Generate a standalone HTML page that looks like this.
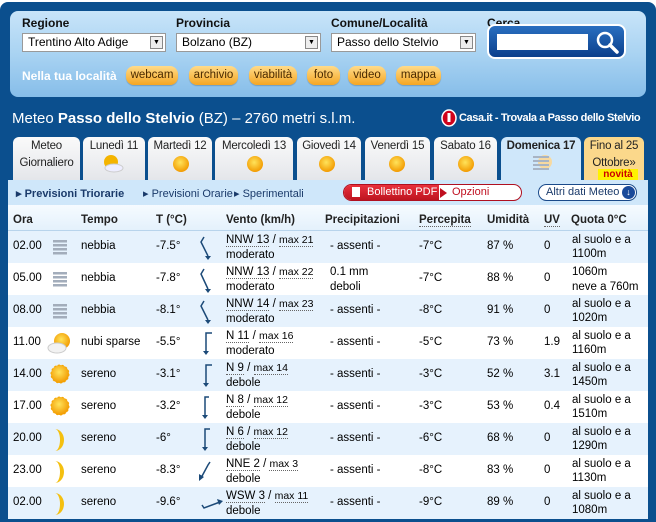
<!DOCTYPE html>
<html><head><meta charset="utf-8"><style>
*{margin:0;padding:0;box-sizing:border-box}
body{width:656px;height:522px;overflow:hidden;background:#fff;font-family:"Liberation Sans",Arial,sans-serif;font-size:12px;color:#000;position:relative}
.frame{position:absolute;left:0;top:2px;width:656px;height:520px;background:#0b4f8e;border-radius:8px 8px 0 0}
.panel{position:absolute;left:10px;top:11px;width:636px;height:86px;border-radius:8px;background:linear-gradient(#c8e4f9,#a9d3f2 50%,#86bde9)}
.lbl{position:absolute;top:16px;font-weight:bold;font-size:12px;color:#111}
.sel{position:absolute;top:33px;height:19px;background:#fff;border:1px solid #999;font-size:12px;padding:2px 5px;line-height:13px}
.sel i{position:absolute;right:2px;top:2px;width:13px;height:13px;border:1px solid #888;background:#eee;font-style:normal;font-size:7px;text-align:center;line-height:12px}
.search{position:absolute;left:487px;top:24px;width:139px;height:35px;border-radius:8px;background:linear-gradient(#2a6fc0,#0b3f8c);border:2px solid #fff}
.search .in{position:absolute;left:8px;top:8px;width:91px;height:16px;background:#fff}
.pill{position:absolute;top:66px;height:19px;border-radius:8px;background:linear-gradient(#ffdb8a,#f5a623);color:#4a2a00;font-size:11.5px;text-align:center;line-height:19px;box-shadow:0 1px 1px rgba(0,0,0,.2)}
.title{position:absolute;left:12px;top:110px;color:#fff;font-size:15px}
.casa{position:absolute;top:112px;color:#fff;font-size:11px;font-weight:bold;letter-spacing:-.4px;white-space:nowrap}
.tab{position:absolute;top:137px;height:43px;background:linear-gradient(#fafafa,#e4e6ea);border-radius:6px 6px 0 0;text-align:center;font-size:11.5px;color:#222;line-height:14px;padding-top:2px;white-space:nowrap;letter-spacing:-.2px}
.sub{position:absolute;left:8px;top:180px;width:640px;height:25px;background:#cfe7fa}
.sub span{position:absolute;top:7px;font-size:11px;color:#1a3a6a;white-space:nowrap}
.thead{position:absolute;left:8px;top:205px;width:640px;height:26px;background:linear-gradient(#f6fbff,#e4f1fc);border-bottom:1px solid #b8d4ec}
.th{position:absolute;top:9px;font-weight:bold;font-size:11.5px;color:#222}
.row{position:absolute;left:8px;width:640px;height:32px}
.row div{position:absolute;font-size:11.5px;white-space:nowrap}
.u{border-bottom:1px dotted #666}
.s{font-size:10.5px}
</style></head><body>
<div class="frame"></div>
<div class="panel"></div>
<div class="lbl" style="left:22px">Regione</div>
<div class="lbl" style="left:176px">Provincia</div>
<div class="lbl" style="left:331px">Comune/Località</div>
<div class="lbl" style="left:487px;top:16px">Cerca</div>
<div class="sel" style="left:22px;width:144px">Trentino Alto Adige<i>▼</i></div>
<div class="sel" style="left:176px;width:145px">Bolzano (BZ)<i>▼</i></div>
<div class="sel" style="left:331px;width:145px">Passo dello Stelvio<i>▼</i></div>
<div class="search"><div class="in"></div>
<svg style="position:absolute;left:106px;top:4px" width="26" height="24"><circle cx="10" cy="10" r="7" fill="none" stroke="#fff" stroke-width="2.5"/><line x1="15" y1="15" x2="22" y2="22" stroke="#fff" stroke-width="3.5" stroke-linecap="round"/></svg></div>
<div style="position:absolute;left:22px;top:69px;color:#fff;font-weight:bold;font-size:12px">Nella tua località</div>
<div class="pill" style="left:126px;width:52px">webcam</div>
<div class="pill" style="left:189px;width:49px">archivio</div>
<div class="pill" style="left:249px;width:48px">viabilità</div>
<div class="pill" style="left:307px;width:33px">foto</div>
<div class="pill" style="left:348px;width:38px">video</div>
<div class="pill" style="left:396px;width:45px">mappa</div>
<div class="title">Meteo <b>Passo dello Stelvio</b> (BZ) – 2760 metri s.l.m.</div>
<svg style="position:absolute;left:441px;top:109px" width="16" height="18"><ellipse cx="8" cy="9" rx="7" ry="8" fill="#d0021b" stroke="#fff" stroke-width="1.5"/><rect x="6.5" y="4" width="3" height="9" fill="#fff"/></svg>
<div class="casa" style="left:459px">Casa.it - Trovala a Passo dello Stelvio</div>

<div class="tab" style="left:13px;width:67px">Meteo<br><span style="line-height:20px">Giornaliero</span></div>
<div class="tab" style="left:83px;width:62px">Lunedì 11</div>
<div class="tab" style="left:148px;width:64px">Martedì 12</div>
<div class="tab" style="left:215px;width:78px">Mercoledì 13</div>
<div class="tab" style="left:297px;width:64px">Giovedì 14</div>
<div class="tab" style="left:365px;width:65px">Venerdì 15</div>
<div class="tab" style="left:434px;width:63px">Sabato 16</div>
<div class="tab" style="left:501px;width:80px;background:#cfe7fa;font-weight:bold">Domenica 17</div>
<div class="tab" style="left:584px;width:60px;background:#fbd88b">Fino al 25<br><span style="line-height:20px">Ottobre»</span></div>
<div style="position:absolute;left:598px;top:169px;width:40px;height:11px;background:#fff200;color:#c00;font-weight:bold;font-size:10px;text-align:center;line-height:11px">novità</div>
<svg style="position:absolute;left:0;top:0" width="656" height="522">
<defs><radialGradient id="sun" cx="45%" cy="40%" r="60%"><stop offset="0" stop-color="#ffe35a"/><stop offset="1" stop-color="#f29a00"/></radialGradient></defs>
<g fill="url(#sun)"><circle cx="111" cy="162" r="7" fill="#f4b400"/><circle cx="181" cy="164" r="8"/><circle cx="255" cy="164" r="8"/><circle cx="327" cy="164" r="8"/><circle cx="397" cy="164" r="8"/><circle cx="466" cy="164" r="8"/></g>
<ellipse cx="114" cy="168" rx="9" ry="4" fill="#eef" stroke="#ccc"/>
<circle cx="545" cy="162" r="7" fill="#f7d9a0"/>
<g fill="#a8b4c4"><rect x="533" y="156" width="16" height="2"/><rect x="533" y="160" width="16" height="2"/><rect x="533" y="164" width="16" height="2"/><rect x="533" y="168" width="16" height="2"/></g>
</svg>

<div class="sub">
<span style="left:8px;font-weight:bold">▸ Previsioni Triorarie</span>
<span style="left:135px">▸ Previsioni Orarie</span>
<span style="left:226px">▸ Sperimentali</span>
<div style="position:absolute;left:335px;top:4px;width:179px;height:17px;border:1px solid #b01020;border-radius:9px;background:#fff;overflow:hidden">
<div style="position:absolute;left:0;top:0;width:95px;height:17px;background:linear-gradient(#e8313c,#b8101c);color:#fff;font-size:11px;line-height:15px;padding-left:23px;white-space:nowrap">Bollettino PDF</div>
<div style="position:absolute;left:8px;top:2px;width:8px;height:10px;background:#fff"></div>
<div style="position:absolute;left:96px;top:3px;width:0;height:0;border-left:7px solid #c01020;border-top:5px solid transparent;border-bottom:5px solid transparent"></div>
<div style="position:absolute;left:108px;top:1px;color:#c01020;font-size:11px">Opzioni</div></div>
<div style="position:absolute;left:530px;top:4px;width:99px;height:17px;border:1px solid #1a4a8a;border-radius:9px;background:#fff;font-size:11px;color:#1a3a6a;line-height:15px;padding-left:7px;white-space:nowrap">Altri dati Meteo
<div style="position:absolute;right:1px;top:1px;width:13px;height:13px;border-radius:50%;background:#1a4a9a;color:#fff;font-size:9px;text-align:center;line-height:13px">↓</div></div>
</div>

<div class="thead">
<div class="th" style="left:5px">Ora</div><div class="th" style="left:73px">Tempo</div><div class="th" style="left:148px">T (°C)</div><div class="th" style="left:218px">Vento (km/h)</div><div class="th" style="left:317px">Precipitazioni</div><div class="th u" style="left:411px">Percepita</div><div class="th" style="left:479px">Umidità</div><div class="th u" style="left:536px">UV</div><div class="th" style="left:563px">Quota 0°C</div>
</div>

<div class="row" style="top:231px;background:#e6f2fd"><div style="left:5px;top:9px">02.00</div><div style="left:73px;top:9px">nebbia</div><div style="left:148px;top:9px">-7.5°</div><div style="left:218px;top:3px"><span class="u">NNW 13</span> / <span class="u s">max 21</span></div><div class="s" style="left:218px;top:18px">moderato</div><div style="left:322px;top:9px">- assenti -</div><div style="left:411px;top:9px">-7°C</div><div style="left:479px;top:9px">87 %</div><div style="left:536px;top:9px">0</div><div class="s" style="left:564px;top:3px">al suolo e a</div><div style="left:564px;top:17px">1100m</div></div>
<div class="row" style="top:263px;background:#fff"><div style="left:5px;top:9px">05.00</div><div style="left:73px;top:9px">nebbia</div><div style="left:148px;top:9px">-7.8°</div><div style="left:218px;top:3px"><span class="u">NNW 13</span> / <span class="u s">max 22</span></div><div class="s" style="left:218px;top:18px">moderato</div><div style="left:322px;top:3px">0.1 mm</div><div class="s" style="left:322px;top:18px">deboli</div><div style="left:411px;top:9px">-7°C</div><div style="left:479px;top:9px">88 %</div><div style="left:536px;top:9px">0</div><div style="left:564px;top:3px">1060m</div><div class="s" style="left:564px;top:18px">neve a 760m</div></div>
<div class="row" style="top:295px;background:#e6f2fd"><div style="left:5px;top:9px">08.00</div><div style="left:73px;top:9px">nebbia</div><div style="left:148px;top:9px">-8.1°</div><div style="left:218px;top:3px"><span class="u">NNW 14</span> / <span class="u s">max 23</span></div><div class="s" style="left:218px;top:18px">moderato</div><div style="left:322px;top:9px">- assenti -</div><div style="left:411px;top:9px">-8°C</div><div style="left:479px;top:9px">91 %</div><div style="left:536px;top:9px">0</div><div class="s" style="left:564px;top:3px">al suolo e a</div><div style="left:564px;top:17px">1020m</div></div>
<div class="row" style="top:327px;background:#fff"><div style="left:5px;top:9px">11.00</div><div style="left:73px;top:9px">nubi sparse</div><div style="left:148px;top:9px">-5.5°</div><div style="left:218px;top:3px"><span class="u">N 11</span> / <span class="u s">max 16</span></div><div class="s" style="left:218px;top:18px">moderato</div><div style="left:322px;top:9px">- assenti -</div><div style="left:411px;top:9px">-5°C</div><div style="left:479px;top:9px">73 %</div><div style="left:536px;top:9px">1.9</div><div class="s" style="left:564px;top:3px">al suolo e a</div><div style="left:564px;top:17px">1160m</div></div>
<div class="row" style="top:359px;background:#e6f2fd"><div style="left:5px;top:9px">14.00</div><div style="left:73px;top:9px">sereno</div><div style="left:148px;top:9px">-3.1°</div><div style="left:218px;top:3px"><span class="u">N 9</span> / <span class="u s">max 14</span></div><div class="s" style="left:218px;top:18px">debole</div><div style="left:322px;top:9px">- assenti -</div><div style="left:411px;top:9px">-3°C</div><div style="left:479px;top:9px">52 %</div><div style="left:536px;top:9px">3.1</div><div class="s" style="left:564px;top:3px">al suolo e a</div><div style="left:564px;top:17px">1450m</div></div>
<div class="row" style="top:391px;background:#fff"><div style="left:5px;top:9px">17.00</div><div style="left:73px;top:9px">sereno</div><div style="left:148px;top:9px">-3.2°</div><div style="left:218px;top:3px"><span class="u">N 8</span> / <span class="u s">max 12</span></div><div class="s" style="left:218px;top:18px">debole</div><div style="left:322px;top:9px">- assenti -</div><div style="left:411px;top:9px">-3°C</div><div style="left:479px;top:9px">53 %</div><div style="left:536px;top:9px">0.4</div><div class="s" style="left:564px;top:3px">al suolo e a</div><div style="left:564px;top:17px">1510m</div></div>
<div class="row" style="top:423px;background:#e6f2fd"><div style="left:5px;top:9px">20.00</div><div style="left:73px;top:9px">sereno</div><div style="left:148px;top:9px">-6°</div><div style="left:218px;top:3px"><span class="u">N 6</span> / <span class="u s">max 12</span></div><div class="s" style="left:218px;top:18px">debole</div><div style="left:322px;top:9px">- assenti -</div><div style="left:411px;top:9px">-6°C</div><div style="left:479px;top:9px">68 %</div><div style="left:536px;top:9px">0</div><div class="s" style="left:564px;top:3px">al suolo e a</div><div style="left:564px;top:17px">1290m</div></div>
<div class="row" style="top:455px;background:#fff"><div style="left:5px;top:9px">23.00</div><div style="left:73px;top:9px">sereno</div><div style="left:148px;top:9px">-8.3°</div><div style="left:218px;top:3px"><span class="u">NNE 2</span> / <span class="u s">max 3</span></div><div class="s" style="left:218px;top:18px">debole</div><div style="left:322px;top:9px">- assenti -</div><div style="left:411px;top:9px">-8°C</div><div style="left:479px;top:9px">83 %</div><div style="left:536px;top:9px">0</div><div class="s" style="left:564px;top:3px">al suolo e a</div><div style="left:564px;top:17px">1130m</div></div>
<div class="row" style="top:487px;background:#e6f2fd;height:32px"><div style="left:5px;top:9px">02.00</div><div style="left:73px;top:9px">sereno</div><div style="left:148px;top:9px">-9.6°</div><div style="left:218px;top:3px"><span class="u">WSW 3</span> / <span class="u s">max 11</span></div><div class="s" style="left:218px;top:18px">debole</div><div style="left:322px;top:9px">- assenti -</div><div style="left:411px;top:9px">-9°C</div><div style="left:479px;top:9px">89 %</div><div style="left:536px;top:9px">0</div><div class="s" style="left:564px;top:3px">al suolo e a</div><div style="left:564px;top:17px">1080m</div></div>

<svg style="position:absolute;left:0;top:0" width="656" height="522">
<defs><radialGradient id="sun2" cx="45%" cy="40%" r="60%"><stop offset="0" stop-color="#ffe35a"/><stop offset="1" stop-color="#f29a00"/></radialGradient></defs>
<g fill="#a3adbb"><rect x="53" y="240" width="14" height="2.5"/><rect x="53" y="244" width="14" height="2.5"/><rect x="53" y="248" width="14" height="2.5"/><rect x="53" y="252" width="14" height="2.5"/>
<rect x="53" y="272" width="14" height="2.5"/><rect x="53" y="276" width="14" height="2.5"/><rect x="53" y="280" width="14" height="2.5"/><rect x="53" y="284" width="14" height="2.5"/>
<rect x="53" y="304" width="14" height="2.5"/><rect x="53" y="308" width="14" height="2.5"/><rect x="53" y="312" width="14" height="2.5"/><rect x="53" y="316" width="14" height="2.5"/></g>
<circle cx="62" cy="341" r="8" fill="url(#sun2)"/><ellipse cx="57" cy="348" rx="9" ry="5" fill="#f2f2f2" stroke="#ccc"/>
<g fill="url(#sun2)" stroke="#f6a500" stroke-width="1" stroke-dasharray="2 2"><circle cx="60" cy="374" r="9"/><circle cx="60" cy="406" r="9"/></g>
<g fill="#f4c010"><path d="M55 429 A9 11 0 0 1 55 451 A5 11 0 0 0 55 429Z"/><path d="M55 461 A9 11 0 0 1 55 483 A5 11 0 0 0 55 461Z"/><path d="M55 493 A9 11 0 0 1 55 515 A5 11 0 0 0 55 493Z"/></g>
<g stroke="#1c4a78" stroke-width="1.5" fill="none">
<path d="M204 237 L201 242 L208 256"/><path d="M204 269 L201 274 L208 289"/><path d="M204 301 L201 306 L208 320"/>
<path d="M212 333 L206 333 L206 351"/><path d="M212 365 L206 365 L206 383"/><path d="M209 397 L205 397 L205 415"/><path d="M210 429 L205 429 L205 447"/>
<path d="M210 462 L208 465 L201 478"/><path d="M202 505 L204 508 L220 502"/></g>
<g fill="#1c4a78"><path d="M205 256 L211 256 L208 260Z"/><path d="M205 289 L211 289 L208 293Z"/><path d="M205 320 L211 320 L208 324Z"/><path d="M203 351 L209 351 L206 355Z"/><path d="M203 383 L209 383 L206 387Z"/><path d="M202 415 L208 415 L205 419Z"/><path d="M202 447 L208 447 L205 451Z"/><path d="M199 474 L204 477 L199 481Z"/><path d="M217 499 L223 501 L219 505Z"/></g>
</svg>
</body></html>
